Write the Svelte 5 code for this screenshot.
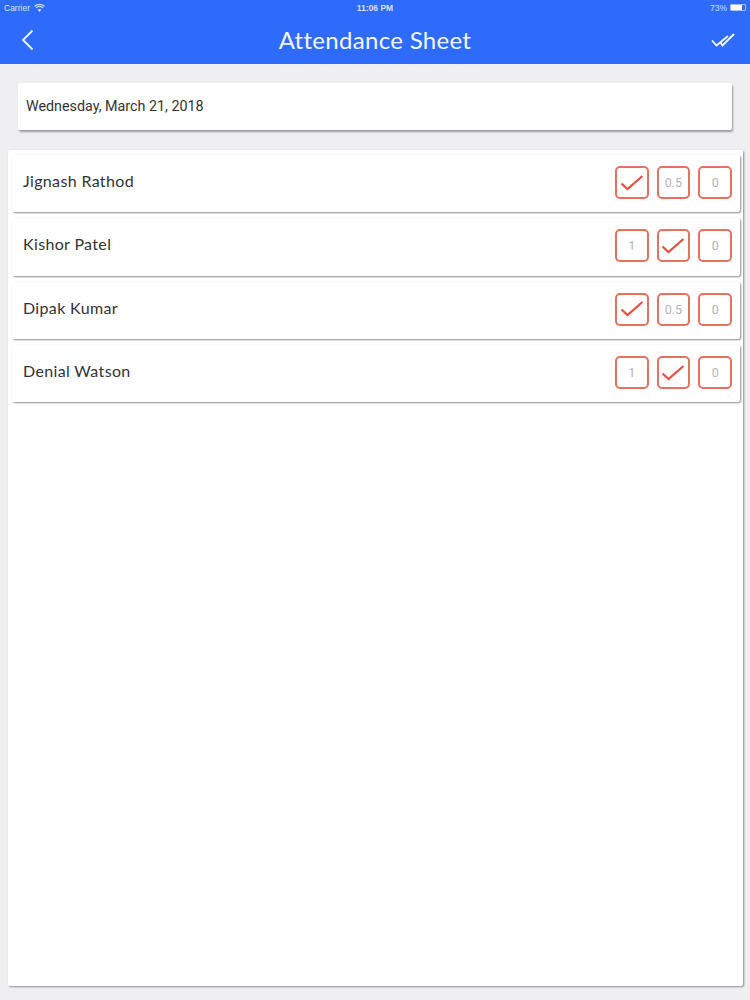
<script>
	const people = [
		{ name: 'Jignash Rathod', value: '1' },
		{ name: 'Kishor Patel', value: '0.5' },
		{ name: 'Dipak Kumar', value: '1' },
		{ name: 'Denial Watson', value: '0.5' }
	];
	const options = ['1', '0.5', '0'];
</script>

<div class="page">
	<header class="topbar">
		<div class="status">
			<div class="status-left">
				<span>Carrier</span>
				<svg width="11" height="8" viewBox="0 0 11 8">
					<path d="M5.5 8 3.6 5.7a3 3 0 0 1 3.8 0z" fill="currentColor" />
					<path d="M1.9 3.9a5.5 5.5 0 0 1 7.2 0M.5 2.3a7.7 7.7 0 0 1 10 0" fill="none" stroke="currentColor" stroke-width="1.2" />
				</svg>
			</div>
			<span class="clock">11:06 PM</span>
			<div class="status-right">
				<span>73%</span>
				<div class="battery"><div class="battery-fill"></div></div>
			</div>
		</div>
		<div class="navbar">
			<svg class="back" width="14" height="22" viewBox="0 0 14 22">
				<path d="M11.5 1.5 2 11l9.5 9.5" fill="none" stroke="#f2f6ff" stroke-width="1.8" />
			</svg>
			<h1>Attendance Sheet</h1>
			<svg class="done" width="24" height="14" viewBox="0 0 24 14">
				<path d="M1 7.5 5.5 12.5 17 3M9 8.5 11.5 12.5 23 1" fill="none" stroke="#f2f6ff" stroke-width="1.8" />
			</svg>
		</div>
	</header>

	<div class="date-card">Wednesday, March 21, 2018</div>

	<section class="panel">
		{#each people as person}
			<div class="row">
				<span class="name">{person.name}</span>
				<div class="choices">
					{#each options as option}
						<div class="choice">
							{#if person.value === option}
								<svg width="24" height="18" viewBox="0 0 24 18">
									<path d="M1.5 9.5 7.5 15 22.5 2" fill="none" stroke="#e8503f" stroke-width="2.3" />
								</svg>
							{:else}
								{option}
							{/if}
						</div>
					{/each}
				</div>
			</div>
		{/each}
	</section>
</div>

<style>
	:global(body) {
		margin: 0;
		background: #efeff1;
	}

	.page {
		height: 1000px;
		display: flex;
		flex-direction: column;
		background: #efeff1;
		overflow: hidden;
	}

	.topbar {
		height: 64px;
		background: #2f6bfb;
		color: #fff;
	}

	.status {
		height: 15px;
		padding: 0 4px;
		display: grid;
		grid-template-columns: 1fr auto 1fr;
		align-items: center;
		font-family: 'Liberation Sans', Arial, sans-serif;
		font-size: 8.5px;
		color: #d5e1ff;
	}

	.status-left {
		display: flex;
		align-items: center;
		gap: 4px;
	}

	.clock {
		font-weight: bold;
	}

	.status-right {
		display: flex;
		align-items: center;
		justify-content: flex-end;
		gap: 3px;
	}

	.battery {
		width: 16px;
		height: 7px;
		border: 1px solid #a9c2ff;
		border-radius: 1px;
		box-sizing: border-box;
		padding: 0 3px 0 0;
	}

	.battery-fill {
		height: 100%;
		background: #fff;
	}

	.navbar {
		height: 49px;
		padding: 0 15px 0 21px;
		display: flex;
		align-items: center;
		justify-content: space-between;
		position: relative;
	}

	.navbar h1 {
		position: absolute;
		left: 0;
		right: 0;
		margin: 0;
		text-align: center;
		font-family: Lato, sans-serif;
		font-size: 24px;
		font-weight: 400;
		letter-spacing: 0.3px;
		color: #f2f6ff;
	}

	.date-card {
		margin: 19px 18px 0;
		height: 47px;
		padding: 0 0 2px 8px;
		box-sizing: border-box;
		display: flex;
		align-items: center;
		background: #fff;
		border-radius: 2px;
		box-shadow: 1px 2px 2px rgba(0, 0, 0, 0.35);
		font-family: Roboto, sans-serif;
		font-size: 14.3px;
		color: #333;
	}

	.panel {
		margin: 20px 7px 0 8px;
		height: 836px;
		padding: 5px 3px 0 4px;
		box-sizing: border-box;
		display: flex;
		flex-direction: column;
		gap: 6px;
		background: #fff;
		border-radius: 2px;
		box-shadow: 1px 1px 2px rgba(0, 0, 0, 0.4);
	}

	.row {
		height: 57.3px;
		padding: 0 8px 0 11px;
		display: flex;
		align-items: center;
		justify-content: space-between;
		background: #fff;
		border-radius: 2px;
		box-shadow: 1px 1px 2px rgba(0, 0, 0, 0.45);
	}

	.name {
		padding-bottom: 6px;
		font-family: Lato, sans-serif;
		font-size: 16px;
		letter-spacing: 0.35px;
		color: #333;
	}

	.choices {
		display: flex;
		gap: 8px;
		padding-bottom: 2px;
	}

	.choice {
		width: 33.7px;
		height: 33px;
		box-sizing: border-box;
		display: flex;
		align-items: center;
		justify-content: center;
		border: 2px solid #e8705f;
		border-radius: 5px;
		font-family: Roboto, sans-serif;
		font-size: 12.5px;
		color: #b4b4b4;
	}
</style>
